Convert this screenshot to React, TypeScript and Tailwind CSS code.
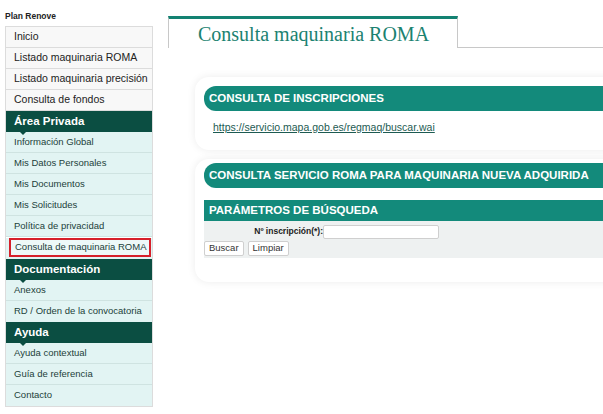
import React from "react";

const topItems = ["Inicio", "Listado maquinaria ROMA", "Listado maquinaria precisión", "Consulta de fondos"];

const sections: { title: string; items: string[] }[] = [
  {
    title: "Área Privada",
    items: [
      "Información Global",
      "Mis Datos Personales",
      "Mis Documentos",
      "Mis Solicitudes",
      "Política de privacidad",
      "Consulta de maquinaria ROMA",
    ],
  },
  { title: "Documentación", items: ["Anexos", "RD / Orden de la convocatoria"] },
  { title: "Ayuda", items: ["Ayuda contextual", "Guía de referencia", "Contacto"] },
];

function SectionHeader({ title }: { title: string }) {
  return (
    <div className="relative flex h-[21px] items-center bg-[#0b4e42] px-[8px] text-[11.5px] font-bold text-white">
      {title}
      <span className="absolute left-[13px] top-[20px] h-0 w-0 border-x-[4px] border-t-[4px] border-x-transparent border-t-[#0b4e42]" />
    </div>
  );
}

function Sidebar() {
  return (
    <aside className="w-[153px] shrink-0 pl-[5px]">
      <div className="h-[26px] pt-[11px] text-[8.5px] font-bold leading-[10px] text-[#222]">Plan Renove</div>
      <div className="border border-[#dcdcdc] whitespace-nowrap">
        {topItems.map((t) => (
          <div
            key={t}
            className="flex h-[21px] items-center border-b border-[#dcdcdc] bg-[#f8f8f8] px-[8px] text-[10.5px] text-[#222]"
          >
            {t}
          </div>
        ))}
        {sections.map((s) => (
          <div key={s.title}>
            <SectionHeader title={s.title} />
            {s.items.map((t) => {
              const active = t === "Consulta de maquinaria ROMA";
              return (
                <div key={t} className="h-[21px] border-b border-[#cfe3e1] bg-[#e2f4f3] last:border-b-0">
                  <div
                    className={
                      active
                        ? "ml-[3px] mr-[1px] mt-[1px] flex h-[19px] items-center border-2 border-[#d6202a] bg-[#eef9f8] px-[4px] text-[9.5px] text-[#1c3f3a]"
                        : "flex h-full items-center px-[8px] text-[9.5px] text-[#1c3f3a]"
                    }
                  >
                    {t}
                  </div>
                </div>
              );
            })}
          </div>
        ))}
      </div>
    </aside>
  );
}

function Bar({ children, rounded }: { children: React.ReactNode; rounded?: boolean }) {
  return (
    <div
      className={
        (rounded ? "h-[25px] rounded-l-[12px] px-[5px] " : "h-[21px] px-[5px] ") +
        "flex items-center bg-[#138a7b] text-[11.5px] font-bold whitespace-nowrap text-white"
      }
    >
      {children}
    </div>
  );
}

function Main() {
  return (
    <main className="min-w-0 flex-1 overflow-hidden pl-[15px]">
      <div className="mt-[16px] flex items-end border-b border-[#c8c8c8]">
        <div className="-mb-px flex h-[32px] w-[290px] items-center border-x border-t-[3px] border-[#c8c8c8] border-t-[#138272] bg-white pl-[29px] font-['Liberation_Serif',serif] text-[20px] text-[#1b8271]">
          Consulta maquinaria ROMA
        </div>
      </div>
      <div className="ml-[27px] mt-[29px] w-[440px] rounded-l-[14px] bg-white pb-[14px] pl-[9px] pt-[9px] shadow-[0_0_8px_rgba(0,0,0,0.08)]">
        <Bar rounded>CONSULTA DE INSCRIPCIONES</Bar>
        <div className="mt-[9px] pl-[9px] text-[10.5px] text-[#1d5b52] underline">
          https://servicio.mapa.gob.es/regmaq/buscar.wai
        </div>
      </div>
      <div className="ml-[27px] mt-[9px] w-[440px] rounded-l-[14px] bg-white pb-[24px] pl-[9px] pt-[4px] shadow-[0_0_8px_rgba(0,0,0,0.08)]">
        <Bar rounded>CONSULTA SERVICIO ROMA PARA MAQUINARIA NUEVA ADQUIRIDA</Bar>
        <div className="mt-[12px]">
          <Bar>PARÁMETROS DE BÚSQUEDA</Bar>
          <div className="bg-[#eef1f1] pb-[2px] pt-[4px]">
            <div className="flex items-center">
              <span className="w-[119px] text-right text-[8.5px] font-bold text-[#222]">Nº inscripción(*):</span>
              <span className="h-[14px] w-[116px] rounded-[2px] border border-[#cfcfcf] bg-white" />
            </div>
            <div className="mt-[2px] flex gap-[4px]">
              <span className="flex h-[15px] items-center rounded-[2px] border border-[#cfcfcf] bg-white px-[4px] text-[9.5px] text-[#333]">
                Buscar
              </span>
              <span className="flex h-[15px] items-center rounded-[2px] border border-[#cfcfcf] bg-white px-[4px] text-[9.5px] text-[#333]">
                Limpiar
              </span>
            </div>
          </div>
        </div>
      </div>
    </main>
  );
}

export default function App() {
  return (
    <div className="flex h-[414px] w-[603px] overflow-hidden bg-white font-['Liberation_Sans',Arial,sans-serif]">
      <Sidebar />
      <Main />
    </div>
  );
}
